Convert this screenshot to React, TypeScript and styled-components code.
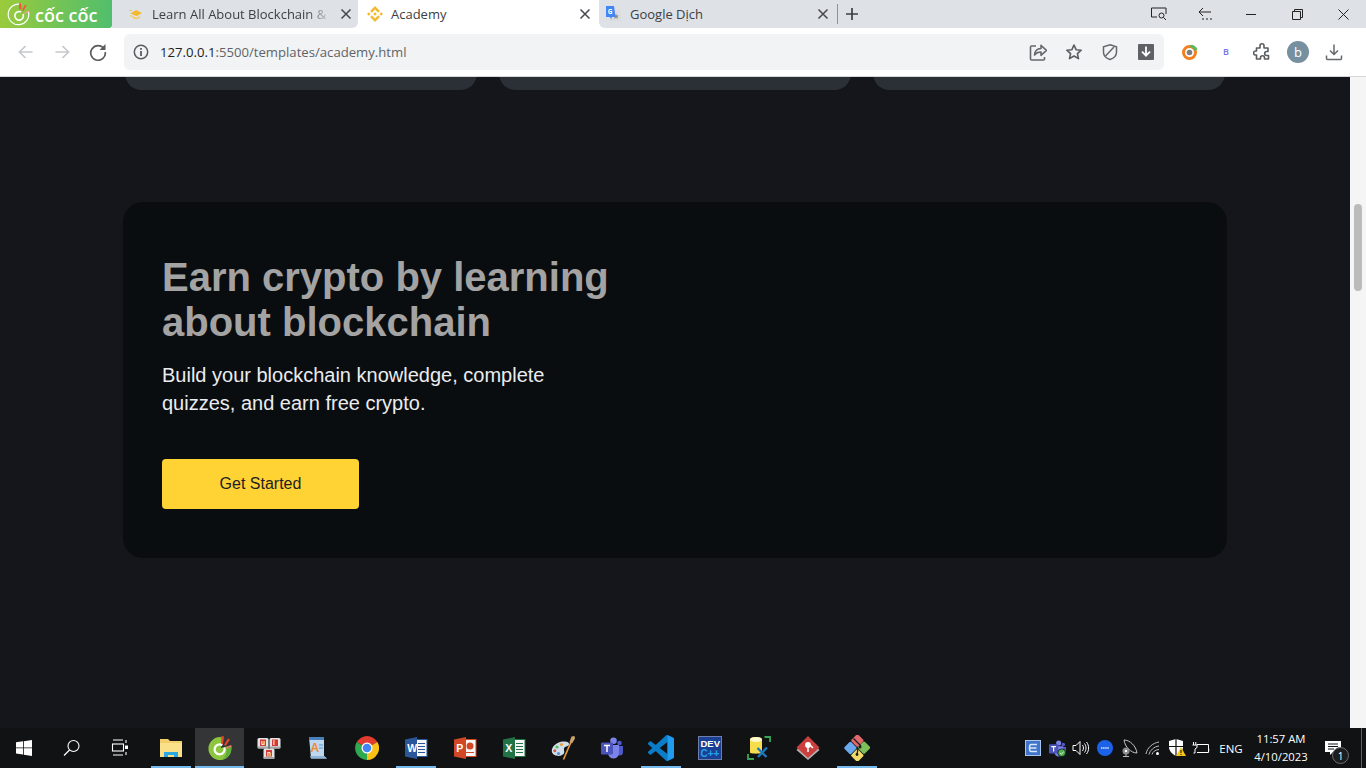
import React, { FC, ReactNode } from "react";
import styled, { createGlobalStyle } from "styled-components";

const GlobalStyle = createGlobalStyle`
  html, body {
    margin: 0;
    height: 100%;
    overflow: hidden;
  }
  * {
    box-sizing: border-box;
  }
`;

const Screen = styled.div`
  display: flex;
  flex-direction: column;
  width: 100%;
  height: 100vh;
  font-family: "Liberation Sans", Arial, sans-serif;
  background: #15161b;
`;

/* browser tabs */
const TabStrip = styled.div`
  display: flex;
  flex: none;
  height: 28px;
  background: #fff;
`;

const Brand = styled.div`
  display: flex;
  flex: none;
  align-items: center;
  gap: 4px;
  width: 112px;
  height: 100%;
  padding-left: 7px;
  background: linear-gradient(100deg, #9ccb3b 0%, #74c455 50%, #4fbe6e 100%);
  border-bottom-right-radius: 3px;
`;

const BrandName = styled.span`
  font-family: "Open Sans", sans-serif;
  font-size: 18px;
  line-height: 24px;
  font-weight: 600;
  color: #fff;
  padding-top: 1px;
`;

const Tab = styled.div<{ $active?: boolean; $width: number; $side?: "left" | "right"; $iconGap: number; $pad: number; $padRight: number }>`
  display: flex;
  flex: none;
  align-items: center;
  gap: ${(p) => p.$iconGap}px;
  width: ${(p) => p.$width}px;
  height: 100%;
  padding-left: ${(p) => p.$pad}px;
  padding-right: ${(p) => p.$padRight}px;
  background: ${(p) => (p.$active ? "#fff" : "#dee1e6")};
  border-bottom-right-radius: ${(p) => (p.$side === "right" ? 6 : 0)}px;
  border-bottom-left-radius: ${(p) => (p.$side === "left" ? 6 : 0)}px;
`;

const TabTitle = styled.span<{ $fade?: boolean }>`
  flex: 1;
  min-width: 0;
  white-space: nowrap;
  font-family: "Open Sans", sans-serif;
  font-size: 13px;
  color: #3c4043;
  ${(p) =>
    p.$fade &&
    `-webkit-mask-image: linear-gradient(90deg, #000 86%, rgba(0,0,0,0.25) 97%);
     mask-image: linear-gradient(90deg, #000 86%, rgba(0,0,0,0.25) 97%);`}
`;

const StripRest = styled.div`
  display: flex;
  flex: 1;
  align-items: center;
  height: 100%;
  background: #dee1e6;
`;

const TabDivider = styled.div`
  flex: none;
  width: 1px;
  height: 20px;
  background: #8f9296;
`;

const NewTab = styled.div`
  display: flex;
  flex: 1;
  align-items: center;
  height: 100%;
  padding-left: 7px;
`;

const WindowButtons = styled.div`
  display: flex;
  flex: none;
  align-items: center;
`;

const WindowButton = styled.div`
  display: flex;
  align-items: center;
  justify-content: center;
  width: 46px;
  height: 28px;
`;

/* address bar */
const Toolbar = styled.div`
  display: flex;
  flex: none;
  align-items: center;
  height: 49px;
  padding: 0 0 1px 8px;
  background: #fff;
  border-bottom: 1px solid #d5d7da;
`;

const NavButton = styled.div`
  display: flex;
  align-items: center;
  justify-content: center;
  flex: none;
  width: 36px;
  height: 36px;
`;

const Omnibox = styled.div`
  display: flex;
  flex: none;
  align-items: center;
  width: 1040px;
  height: 36px;
  margin: 0 8px;
  padding-left: 9px;
  border-radius: 6px;
  background: #f1f3f4;
`;

const Url = styled.div`
  flex: 1;
  padding-left: 11px;
  font-family: "Open Sans", sans-serif;
  font-size: 13.15px;
  color: #5f6368;
`;

const UrlHost = styled.span`
  color: #202124;
`;

const Avatar = styled.div`
  display: flex;
  align-items: center;
  justify-content: center;
  width: 22px;
  height: 22px;
  border-radius: 50%;
  background: #76909f;
  color: #fff;
  font-family: "Open Sans", sans-serif;
  font-size: 13px;
`;

const ExtensionLetter = styled.span`
  font-family: "Open Sans", sans-serif;
  font-size: 9px;
  font-weight: 600;
  color: #7474e0;
`;

/* page */
const Viewport = styled.div`
  display: flex;
  flex: 1;
  min-height: 0;
`;

const Main = styled.main`
  flex: 1;
  min-width: 0;
  padding: 0 123px;
  background: #15161b;
`;

const CardRow = styled.div`
  display: grid;
  grid-template-columns: repeat(3, 352px);
  gap: 22px;
  height: 13px;
  padding-left: 2px;
  overflow: hidden;
`;

const CardEnd = styled.div`
  height: 33px;
  margin-top: -20px;
  background: #2b2f36;
  border-radius: 20px;
`;

const Promo = styled.section`
  display: flex;
  flex-direction: column;
  align-items: flex-start;
  width: 1104px;
  height: 356px;
  margin-top: 112px;
  padding: 53px 39px 0;
  border-radius: 20px;
  background: #0a0d10;
`;

const PromoTitle = styled.h2`
  width: 480px;
  margin: 0;
  font-size: 40px;
  line-height: 45px;
  font-weight: 700;
  color: #a3a3a3;
`;

const PromoText = styled.p`
  width: 420px;
  margin: 16px 0 0;
  font-size: 20px;
  line-height: 28px;
  color: #eaecef;
`;

const CtaButton = styled.button`
  width: 197px;
  height: 50px;
  margin-top: 42px;
  border: 0;
  border-radius: 4px;
  background: #ffd333;
  color: #1e2026;
  font-family: inherit;
  font-size: 16px;
`;

const ScrollTrack = styled.div`
  flex: none;
  width: 16px;
  padding: 127px 4px 0;
  background: #f5f5f5;
`;

const ScrollThumb = styled.div`
  height: 87px;
  border-radius: 4px;
  background: #bbb;
`;

/* windows taskbar */
const Taskbar = styled.footer`
  display: flex;
  flex: none;
  align-items: stretch;
  height: 40px;
  background: #101214;
`;

const SystemButton = styled.div`
  display: flex;
  align-items: center;
  justify-content: center;
  flex: none;
  width: 48px;
`;

const AppList = styled.div`
  display: flex;
  flex: none;
  padding-left: 2px;
`;

const AppSlot = styled.div<{ $open?: boolean; $focused?: boolean }>`
  position: relative;
  display: flex;
  align-items: center;
  justify-content: center;
  flex: none;
  width: 49px;
  background: ${(p) => (p.$focused ? "#333537" : "transparent")};
  &::after {
    content: "";
    display: ${(p) => (p.$open ? "block" : "none")};
    position: absolute;
    bottom: 0;
    left: ${(p) => (p.$focused ? 0 : 5)}px;
    right: ${(p) => (p.$focused ? 0 : 4)}px;
    height: 2px;
    background: #76b9ed;
  }
`;

const Tray = styled.div`
  display: flex;
  flex: 1;
  align-items: center;
  justify-content: flex-end;
`;

const TrayIcon = styled.div`
  display: flex;
  align-items: center;
  justify-content: center;
  flex: none;
  width: 24px;
  height: 40px;
`;

const Lang = styled.div`
  flex: none;
  width: 36px;
  text-align: center;
  font-family: "Open Sans", sans-serif;
  font-size: 11.5px;
  color: #fff;
`;

const Clock = styled.div`
  flex: none;
  width: 64px;
  font-family: "Open Sans", sans-serif;
  font-size: 11.3px;
  line-height: 18px;
  text-align: center;
  color: #fff;
`;

const Notification = styled.div`
  position: relative;
  display: flex;
  align-items: center;
  flex: none;
  width: 48px;
  height: 40px;
  padding-left: 12px;
`;

const NotificationBadge = styled.span`
  position: absolute;
  right: 12px;
  bottom: 4px;
  display: flex;
  align-items: center;
  justify-content: center;
  width: 17px;
  height: 17px;
  border-radius: 50%;
  background: #1c1d1f;
  border: 1.5px solid #6d6e70;
  color: #fff;
  font-family: "Open Sans", sans-serif;
  font-size: 10px;
`;

const ShowDesktop = styled.div`
  flex: none;
  width: 5px;
  height: 100%;
  border-left: 1px solid #5c5e60;
`;

/* icons */
const Svg: FC<{ size?: number; w?: number; h?: number; vb?: string; children: ReactNode }> = ({ size = 16, w, h, vb, children }) => (
  <svg width={w ?? size} height={h ?? size} viewBox={vb ?? `0 0 ${size} ${size}`} fill="none" style={{ display: "block", flex: "none" }}>
    {children}
  </svg>
);

const CloseIcon: FC = () => (
  <Svg size={12}>
    <path d="M1.5 1.5l9 9M10.5 1.5l-9 9" stroke="#45474a" strokeWidth="1.5" />
  </Svg>
);

const CocCocLogo: FC = () => (
  <Svg size={24}>
    <path d="M13.500 2.300A10.300 10.300 0 1 0 21.500 10" stroke="#fff" strokeWidth="1.200" />
    <path d="M14 10a4.300 4.300 0 1 0 2 2" stroke="#fff" strokeWidth="1.600" />
    <path d="M12.300 7.500L12 1.500l1.900-.3.700 6.100z" fill="#f2563a" />
    <path d="M15 8.300l3-5.500 1.500.8-3 5.500z" fill="#f2563a" />
    <path d="M16.800 11l5-2.700.6 1.300-5 2.500z" fill="#f7a08c" />
  </Svg>
);

const AcademyFav: FC = () => (
  <Svg size={14}>
    <path d="M1.500 6.500l5.500-3.500 6 3-5.500 3.300z" fill="#f3ba2f" />
    <path d="M3.500 9l3.800 2 3.500-2v1.700c-2 1.800-4.800 1.800-7.300 0z" fill="#f7c948" />
    <path d="M0 3.500h3M1 9h2" stroke="#f7c948" />
  </Svg>
);

const BinanceFav: FC = () => (
  <Svg w={16} h={16} vb="0 0 126.610 126.610">
    <path
      d="M38.730 53.200l24.590-24.580 24.600 24.600 14.300-14.310L63.320 0 24.420 38.900zM0 63.310l14.300-14.310 14.310 14.310-14.310 14.300zM38.730 73.410l24.590 24.590 24.600-24.600 14.310 14.290-38.900 38.910-38.910-38.880-.02-.02zM98 63.310l14.300-14.310 14.310 14.300-14.310 14.320zM77.830 63.300L63.320 48.780 52.590 59.510l-1.240 1.230-2.540 2.540 14.510 14.500 14.500-14.470z"
      fill="#f3ba2f"
    />
  </Svg>
);

const TranslateFav: FC = () => (
  <Svg size={16}>
    <rect x="6" y="4" width="10" height="11" fill="#dadce0" />
    <path d="M11 7.500l.9 1.900 2 .2-1.500 1.300.5 2-1.900-1.100-1.800 1.100.4-2-1.500-1.300 2-.2z" fill="#8a8c90" />
    <path d="M1 0h8l1.500 11H6.500v2.800L4.700 11H1z" fill="#4285f4" />
    <text x="2.700" y="8" fontFamily="Open Sans" fontWeight="700" fontSize="6.500" fill="#fff">G</text>
  </Svg>
);

const ArrowIcon: FC<{ flip?: boolean }> = ({ flip }) => (
  <Svg size={16}>
    <path d={flip ? "M1.500 8h13M8.500 2l6 6-6 6" : "M14.500 8h-13M7.500 2l-6 6 6 6"} stroke="#c5c7ca" strokeWidth="1.600" />
  </Svg>
);

const ReloadIcon: FC = () => (
  <Svg size={18}>
    <path d="M15.200 6A7.300 7.300 0 1 0 16.300 9" stroke="#5a5d60" strokeWidth="1.700" />
    <path d="M16.500 1v6h-6z" fill="#5a5d60" />
  </Svg>
);

const InfoIcon: FC = () => (
  <Svg size={16}>
    <circle cx="8" cy="8" r="6.700" stroke="#5a5d60" strokeWidth="1.500" />
    <rect x="7.100" y="7" width="1.800" height="5" fill="#5a5d60" />
    <rect x="7.100" y="4" width="1.800" height="1.800" fill="#5a5d60" />
  </Svg>
);

const ShareIcon: FC = () => (
  <Svg size={18}>
    <path d="M7 3H2.500A1 1 0 0 0 1.500 4v12a1 1 0 0 0 1 1h12a1 1 0 0 0 1-1v-2" stroke="#66696c" strokeWidth="1.600" />
    <path d="M5.500 12c.3-4 3-6.300 6.500-6.500V2.300l5.500 5-5.500 5V9C9.500 9 7 10 5.500 12z" stroke="#66696c" strokeWidth="1.600" strokeLinejoin="round" />
  </Svg>
);

const StarIcon: FC = () => (
  <Svg size={18}>
    <path d="M9 2l2.100 4.700 5.100.5-3.800 3.400 1.100 5L9 13l-4.500 2.600 1.100-5L1.800 7.200l5.100-.5z" stroke="#5a5d60" strokeWidth="1.600" strokeLinejoin="round" />
  </Svg>
);

const ShieldIcon: FC = () => (
  <Svg size={18}>
    <path d="M9 1.800l6.500 2v5.400c0 3.500-2.700 6-6.500 7.300-3.800-1.300-6.500-3.800-6.500-7.300V3.800z" stroke="#66696c" strokeWidth="1.500" />
    <path d="M4.500 13L13 4" stroke="#66696c" strokeWidth="1.500" />
  </Svg>
);

const SaveBoxIcon: FC = () => (
  <Svg size={18}>
    <rect x="1" y="1" width="16" height="16" rx="1" fill="#5f6164" />
    <path d="M9 3.500v9M5 8.700l4 4 4-4" stroke="#fff" strokeWidth="1.800" />
  </Svg>
);

const BrowserExtIcon: FC = () => (
  <Svg size={18}>
    <circle cx="8.500" cy="9.500" r="6" stroke="#f28022" strokeWidth="3" />
    <path d="M9.500 1.700a7.500 7.500 0 0 1 7 5l-2.900 1A4.600 4.600 0 0 0 9.200 4.600z" fill="#5cb85c" />
    <circle cx="8.500" cy="9.500" r="2.800" fill="#7b7f83" />
  </Svg>
);

const PuzzleIcon: FC = () => (
  <Svg size={18}>
    <path d="M7 2.800a2 2 0 0 1 4 0V5h4v3.500h-1.300a2 2 0 0 0 0 4H15.500V16h-4v-1.300a2 2 0 0 0-4 0V16H3.500v-4H2.600a2 2 0 0 1 0-4h.900V5H7z" stroke="#5a5d60" strokeWidth="1.600" strokeLinejoin="round" />
  </Svg>
);

const DownloadIcon: FC = () => (
  <Svg size={18}>
    <path d="M9 1.500v10M5 7.500l4 4 4-4" stroke="#66696c" strokeWidth="1.500" />
    <path d="M1.500 12.500v3a1 1 0 0 0 1 1h13a1 1 0 0 0 1-1v-3" stroke="#66696c" strokeWidth="1.500" />
  </Svg>
);

const WindowsLogo: FC = () => (
  <Svg size={16}>
    <path d="M0 2.300L7 1.300V7.500H0zM7.800 1.200L16 0V7.500H7.800zM0 8.300h7v6.300L0 13.600zM7.800 8.300H16V16l-8.200-1.200z" fill="#fff" />
  </Svg>
);

const SearchIcon: FC = () => (
  <Svg size={18}>
    <circle cx="10.500" cy="7" r="5.500" stroke="#fff" strokeWidth="1.100" />
    <path d="M6.500 11L1 16.500" stroke="#fff" strokeWidth="1.300" />
  </Svg>
);

const TaskViewIcon: FC = () => (
  <Svg size={18}>
    <path d="M2 1h10M2 16h10" stroke="#fff" strokeWidth="1.100" />
    <rect x="1.500" y="5" width="11" height="7" stroke="#fff" strokeWidth="1.100" />
    <path d="M15 1v3M15 13v3" stroke="#fff" strokeWidth="1.100" />
    <rect x="14" y="6.500" width="3" height="3.500" fill="#fff" />
  </Svg>
);

const ExplorerIcon: FC = () => (
  <Svg w={22} h={20} vb="0 0 22 20">
    <path d="M0 1h8l2 2h12v15H0z" fill="#f3cf6b" />
    <path d="M0 5h22v14H0z" fill="#fbe08a" />
    <path d="M4 19v-5h14v5h-4v-2H8v2z" fill="#2ea9e0" />
  </Svg>
);

const CocCocApp: FC = () => (
  <Svg size={24}>
    <path d="M14.500 1.400A11.500 11.500 0 1 0 23 9.500L13 12z" fill="#8cc63f" />
    <path d="M23 9.500a11.500 11.500 0 0 1-9 13.700A11 11 0 0 0 18 11z" fill="#5cae3c" />
    <path d="M14.300 9.200a5 5 0 1 0 2 2.500" stroke="#fff" strokeWidth="2.200" />
    <path d="M13 7.500L13.500 0l2.500.4-.9 7.600z" fill="#e8452c" />
    <path d="M16 9l4-6.500 2 1.200-4.300 6.400z" fill="#e8452c" />
    <path d="M18 11.500l5-2.500.7 1.800-5.300 2z" fill="#f0785f" />
  </Svg>
);

const KeyCap: FC<{ x: number; y: number; letter: string }> = ({ x, y, letter }) => (
  <g>
    <rect x={x} y={y} width="11" height="10.500" rx="1.500" fill="#e4e4e4" />
    <rect x={x} y={y + 8.500} width="11" height="2" rx="1" fill="#a5a5a5" />
    <rect x={x + 2.500} y={y + 1.500} width="6" height="6.500" fill="#cf3a36" />
    <text x={x + 3.500} y={y + 7} fontFamily="Liberation Sans" fontWeight="700" fontSize="6.500" fill="#fff">{letter}</text>
  </g>
);

const UnikeyIcon: FC = () => (
  <Svg w={24} h={21} vb="0 0 24 21">
    <KeyCap x={0.500} y={0} letter="u" />
    <KeyCap x={12.500} y={0} letter="i" />
    <KeyCap x={6.500} y={10.500} letter="n" />
  </Svg>
);

const DocAIcon: FC = () => (
  <Svg w={20} h={24} vb="0 0 20 24">
    <path d="M1 1h15v19l3 2.500H3z" fill="#bcd7ee" />
    <path d="M1 1h15v3H1z" fill="#4a80ba" />
    <path d="M2 20h14l3 2.500H3z" fill="#8fb4d6" />
    <text x="2.500" y="15.500" fontFamily="Liberation Sans" fontWeight="700" fontSize="12" fill="#ee8b2d">A</text>
    <path d="M11 9h4M11 12h4" stroke="#5a93c8" />
  </Svg>
);

const ChromeIcon: FC = () => (
  <Svg size={24}>
    <path d="M12 12L1.700 6A12 12 0 0 1 22.400 6z" fill="#e33b2e" />
    <path d="M12 12L22.400 6A12 12 0 0 1 12 24z" fill="#fbc116" />
    <path d="M12 12V24A12 12 0 0 1 1.700 6z" fill="#2fa84f" />
    <circle cx="12" cy="12" r="5.500" fill="#fff" />
    <circle cx="12" cy="12" r="4.300" fill="#4285f4" />
  </Svg>
);

const OfficeIcon: FC<{ color: string; letter: string; lines?: boolean }> = ({ color, letter, lines }) => (
  <Svg w={24} h={22} vb="0 0 24 22">
    <rect x="9" y="2.500" width="14" height="17" fill="#f6f6f6" stroke={color} />
    {lines && <path d="M14 6.500h7M14 9.500h7M14 12.500h7M14 15.500h7" stroke={color} />}
    {!lines && <circle cx="17" cy="9" r="3.500" fill={color} />}
    {!lines && <path d="M13 15.500h8" stroke={color} />}
    <path d="M1 2.500L13 0v22L1 19.500z" fill={color} />
    <text x="3.200" y="15" fontFamily="Liberation Sans" fontWeight="700" fontSize="10.500" fill="#fff">{letter}</text>
  </Svg>
);

const PaletteIcon: FC = () => (
  <Svg size={24}>
    <path d="M.8 15.500C.5 10 6 6 12 5.500c4-.3 6.500 1 6 3-.7 2.500-4.500 1.500-5 4-.4 2 1.200 3.500-.5 5.500-3.500 3.500-11 2-11.700-2.500z" fill="#cfe0ec" />
    <circle cx="6" cy="11" r="1.600" fill="#5cb85c" />
    <circle cx="10.500" cy="8.500" r="1.600" fill="#e8a13a" />
    <circle cx="3.800" cy="14.800" r="1.500" fill="#d9534f" />
    <circle cx="7.500" cy="17.500" r="1.600" fill="#5b8fd6" />
    <path d="M12.500 23.500L20 6" stroke="#e39a3e" strokeWidth="1.700" />
    <path d="M18.500 6l2-5.500 3-.5.500 2.500-3 5z" fill="#c9a46c" />
  </Svg>
);

const TeamsIcon: FC<{ scale?: number; check?: boolean }> = ({ scale = 22, check }) => (
  <Svg w={scale} h={scale} vb="0 0 22 22">
    <circle cx="12.500" cy="3.800" r="3.300" fill="#7b83eb" />
    <circle cx="18.500" cy="6" r="2.300" fill="#5059c9" />
    <path d="M15 9h7v6a3.500 3.500 0 0 1-7 0z" fill="#5059c9" />
    <path d="M7 8h11v8a5.500 5.500 0 0 1-11 0z" fill="#7b83eb" />
    <rect x="0" y="5.500" width="12" height="12" rx="1" fill="#4b53bc" />
    <path d="M3 8.500h6M6 8.500v6.500" stroke="#fff" strokeWidth="1.500" />
    {check && <circle cx="16.500" cy="16.500" r="5" fill="#4caf50" stroke="#101214" />}
    {check && <path d="M14 16.500l2 2 3-3.500" stroke="#fff" />}
  </Svg>
);

const VsCodeIcon: FC = () => (
  <Svg w={26} h={26} vb="0 0 24 24">
    <path
      d="M23.150 2.587L18.210.21a1.494 1.494 0 0 0-1.705.29l-9.460 8.630-4.120-3.128a.999.999 0 0 0-1.276.057L.327 7.261A1 1 0 0 0 .326 8.740L3.899 12 .326 15.260a1 1 0 0 0 .001 1.479L1.650 17.940a.999.999 0 0 0 1.276.057l4.120-3.128 9.460 8.630a1.492 1.492 0 0 0 1.704.29l4.942-2.377A1.500 1.500 0 0 0 24 20.060V3.939a1.500 1.500 0 0 0-.850-1.352zm-5.146 14.861L10.826 12l7.178-5.448v10.896z"
      fill="#0a7cc8"
    />
    <path d="M18 .1l5.150 2.487A1.500 1.500 0 0 1 24 3.939V20.060a1.500 1.500 0 0 1-.850 1.352L18 23.900z" fill="#1f9cf0" />
  </Svg>
);

const DevCppIcon: FC = () => (
  <Svg size={24}>
    <rect x="0.500" y="0.500" width="23" height="23" fill="#1b3f94" stroke="#6f7ea8" />
    <text x="2.500" y="10.500" fontFamily="Liberation Sans" fontWeight="700" fontSize="9.500" fill="#fff">DEV</text>
    <text x="2.500" y="20.500" fontFamily="Liberation Sans" fontWeight="700" fontSize="10" fill="#24a2e8">C++</text>
  </Svg>
);

const DbToolsIcon: FC = () => (
  <Svg size={24}>
    <path d="M3 3.500c0-3.300 12-3.300 12 0v13c0 1.500-12 1.500-12 0z" fill="#f6dd4a" />
    <ellipse cx="9" cy="3.500" rx="6" ry="2.500" fill="#fff8cf" />
    <path d="M17.500 1H23v5M1 18v5h6" stroke="#3aa655" strokeWidth="1.800" />
    <path d="M10.500 12l9 9M20 11.500l-9 9.500" stroke="#1f78bd" strokeWidth="2.400" />
  </Svg>
);

const RedDiamondIcon: FC = () => (
  <Svg size={24}>
    <path d="M12 2.500l11.500 11.500L12 24 .5 14z" fill="#b9b1b1" />
    <path d="M12 0l11.500 11.500L12 22 .5 11.500z" fill="#c9403f" />
    <circle cx="12" cy="9" r="2.900" fill="#fff" />
    <path d="M12 10v6M14 9l3 3" stroke="#fff" strokeWidth="1.500" />
  </Svg>
);

const GitColorIcon: FC = () => (
  <Svg size={26}>
    <rect x="8.500" y="0.500" width="9.500" height="9.500" rx="1.500" transform="rotate(45 13 5.500)" fill="#e0696c" />
    <rect x="1.500" y="8" width="9.500" height="9.500" rx="1.500" transform="rotate(45 6 13)" fill="#6aa9ee" />
    <rect x="15" y="8" width="9.500" height="9.500" rx="1.500" transform="rotate(45 20 13)" fill="#7cc05a" />
    <rect x="8.500" y="15.500" width="9.500" height="9.500" rx="1.500" transform="rotate(45 13 20.500)" fill="#f3d968" />
    <path d="M9.500 3.500L17 11M14 13l-1 7" stroke="#1c1c1c" strokeWidth="1.300" />
    <circle cx="16" cy="12" r="1.500" fill="#1c1c1c" />
    <circle cx="13" cy="19.500" r="1.400" fill="#1c1c1c" />
  </Svg>
);

const LeTrayIcon: FC = () => (
  <Svg size={16}>
    <rect x="0.500" y="0.500" width="15" height="15" fill="#3f74c9" stroke="#a8c4ef" />
    <path d="M12 4.500H6C4 4.500 4 11.500 6 11.500h6M4.500 8h7" stroke="#d8e6fb" strokeWidth="1.500" />
  </Svg>
);

const VolumeIcon: FC = () => (
  <Svg w={18} h={16} vb="0 0 18 16">
    <path d="M1 5.500h3l4-4v13l-4-4H1z" stroke="#fff" />
    <path d="M10.500 5c1.300 1.800 1.300 4.200 0 6M12.500 3.500c2 2.700 2 6.300 0 9M14.500 2c2.800 3.600 2.800 8.400 0 12" stroke="#fff" />
  </Svg>
);

const ZoomTrayIcon: FC = () => (
  <Svg size={16}>
    <circle cx="8" cy="8" r="8" fill="#1c62e8" />
    <path d="M4 8h8" stroke="#dbe6fb" strokeWidth="1.600" strokeDasharray="1.500 0.600" />
  </Svg>
);

const SatelliteIcon: FC = () => (
  <Svg size={18}>
    <path d="M4 1c6 0 12 6 13 13-6 0-12-6-13-13z" stroke="#c5c5c5" />
    <circle cx="6" cy="12" r="3.500" fill="#8b8b8b" />
    <circle cx="6" cy="12" r="1.200" fill="#fff" />
    <path d="M6 15v2.500M3 17.500h6" stroke="#bbb" />
  </Svg>
);

const WifiIcon: FC = () => (
  <Svg size={16}>
    <path d="M1 14C2 8 7.500 3 14 2M4 14.500C5 10.500 9 6.500 14 6M7 14.500c.6-2.500 3-4.700 7-5" stroke="#bdbdbd" />
    <circle cx="12.500" cy="13.500" r="1.500" fill="#fff" />
  </Svg>
);

const DefenderIcon: FC = () => (
  <Svg size={18}>
    <path d="M8 0l7 2v6c0 4-3 7-7 9-4-2-7-5-7-9V2z" fill="#fff" />
    <path d="M8 0v17M1 7.500h14" stroke="#101214" strokeWidth="1.200" />
    <path d="M13 8l5 9H8z" fill="#f5c518" />
    <path d="M13 11v3M13 15v1" stroke="#101214" />
  </Svg>
);

const BatteryIcon: FC = () => (
  <Svg w={18} h={14} vb="0 0 18 14">
    <path d="M5 3.500h11.500v8H5M16.500 6v3h1" stroke="#fff" />
    <path d="M1.500 1v3M3.800 1v3M.5 4h4.500v2.500L3 8v4H1.500" stroke="#fff" />
  </Svg>
);

const NotifyIcon: FC = () => (
  <Svg size={16}>
    <path d="M0 1h16v11H8l-3 3v-3H0z" fill="#fff" />
    <path d="M3 4h10M3 6.500h10M3 9h6" stroke="#101214" />
  </Svg>
);

const taskbarApps: { icon: ReactNode; open?: boolean; focused?: boolean }[] = [
  { icon: <ExplorerIcon />, open: true },
  { icon: <CocCocApp />, open: true, focused: true },
  { icon: <UnikeyIcon /> },
  { icon: <DocAIcon /> },
  { icon: <ChromeIcon /> },
  { icon: <OfficeIcon color="#2b579a" letter="W" lines />, open: true },
  { icon: <OfficeIcon color="#d24726" letter="P" /> },
  { icon: <OfficeIcon color="#217346" letter="X" lines /> },
  { icon: <PaletteIcon /> },
  { icon: <TeamsIcon /> },
  { icon: <VsCodeIcon />, open: true },
  { icon: <DevCppIcon /> },
  { icon: <DbToolsIcon /> },
  { icon: <RedDiamondIcon /> },
  { icon: <GitColorIcon />, open: true },
];

const App: FC = () => {
  return (
    <Screen>
      <GlobalStyle />
      <TabStrip>
        <Brand>
          <CocCocLogo />
          <BrandName>cốc cốc</BrandName>
        </Brand>
        <Tab $width={246} $side="right" $iconGap={9} $pad={17} $padRight={6}>
          <AcademyFav />
          <TabTitle $fade>Learn All About Blockchain &amp;</TabTitle>
          <CloseIcon />
        </Tab>
        <Tab $active $width={241} $iconGap={8} $pad={9} $padRight={8}>
          <BinanceFav />
          <TabTitle>Academy</TabTitle>
          <CloseIcon />
        </Tab>
        <Tab $width={238} $side="left" $iconGap={9} $pad={6} $padRight={8}>
          <TranslateFav />
          <TabTitle>Google Dịch</TabTitle>
          <CloseIcon />
        </Tab>
        <StripRest>
          <TabDivider />
          <NewTab>
            <Svg size={14}>
              <path d="M7 1v12M1 7h12" stroke="#3c4043" strokeWidth="1.700" />
            </Svg>
          </NewTab>
          <WindowButtons>
            <WindowButton>
              <Svg w={18} h={14} vb="0 0 18 14">
                <path d="M7 10H1.500V1h14.500v6" stroke="#222" />
                <circle cx="11.500" cy="8.500" r="2.500" stroke="#222" />
                <path d="M13.500 10.500l2.500 2.500" stroke="#222" />
              </Svg>
            </WindowButton>
            <WindowButton>
              <Svg w={16} h={14} vb="0 0 16 14">
                <path d="M14 5H2M6 1L2 5l4 4" stroke="#222" />
                <path d="M5 12h2M9 12h2M13 12h2" stroke="#222" />
              </Svg>
            </WindowButton>
            <WindowButton>
              <Svg size={11}>
                <path d="M0 5.500h10" stroke="#222" />
              </Svg>
            </WindowButton>
            <WindowButton>
              <Svg size={11}>
                <path d="M.5 2.500h8v8h-8zM2.500 2.500v-2h8v8h-2" stroke="#222" />
              </Svg>
            </WindowButton>
            <WindowButton>
              <Svg size={11}>
                <path d="M.5.500l10 10M10.500.500l-10 10" stroke="#222" />
              </Svg>
            </WindowButton>
          </WindowButtons>
        </StripRest>
      </TabStrip>

      <Toolbar>
        <NavButton>
          <ArrowIcon />
        </NavButton>
        <NavButton>
          <ArrowIcon flip />
        </NavButton>
        <NavButton>
          <ReloadIcon />
        </NavButton>
        <Omnibox>
          <InfoIcon />
          <Url>
            <UrlHost>127.0.0.1</UrlHost>:5500/templates/academy.html
          </Url>
          <NavButton>
            <ShareIcon />
          </NavButton>
          <NavButton>
            <StarIcon />
          </NavButton>
          <NavButton>
            <ShieldIcon />
          </NavButton>
          <NavButton>
            <SaveBoxIcon />
          </NavButton>
        </Omnibox>
        <NavButton>
          <BrowserExtIcon />
        </NavButton>
        <NavButton>
          <ExtensionLetter>B</ExtensionLetter>
        </NavButton>
        <NavButton>
          <PuzzleIcon />
        </NavButton>
        <NavButton>
          <Avatar>b</Avatar>
        </NavButton>
        <NavButton>
          <DownloadIcon />
        </NavButton>
      </Toolbar>

      <Viewport>
        <Main>
          <CardRow>
            <CardEnd />
            <CardEnd />
            <CardEnd />
          </CardRow>
          <Promo>
            <PromoTitle>Earn crypto by learning about blockchain</PromoTitle>
            <PromoText>Build your blockchain knowledge, complete quizzes, and earn free crypto.</PromoText>
            <CtaButton>Get Started</CtaButton>
          </Promo>
        </Main>
        <ScrollTrack>
          <ScrollThumb />
        </ScrollTrack>
      </Viewport>

      <Taskbar>
        <SystemButton>
          <WindowsLogo />
        </SystemButton>
        <SystemButton>
          <SearchIcon />
        </SystemButton>
        <SystemButton>
          <TaskViewIcon />
        </SystemButton>
        <AppList>
          {taskbarApps.map((app, i) => (
            <AppSlot key={i} $open={app.open} $focused={app.focused}>
              {app.icon}
            </AppSlot>
          ))}
        </AppList>
        <Tray>
          <TrayIcon>
            <LeTrayIcon />
          </TrayIcon>
          <TrayIcon>
            <TeamsIcon scale={17} check />
          </TrayIcon>
          <TrayIcon>
            <VolumeIcon />
          </TrayIcon>
          <TrayIcon>
            <ZoomTrayIcon />
          </TrayIcon>
          <TrayIcon>
            <SatelliteIcon />
          </TrayIcon>
          <TrayIcon>
            <WifiIcon />
          </TrayIcon>
          <TrayIcon>
            <DefenderIcon />
          </TrayIcon>
          <TrayIcon>
            <BatteryIcon />
          </TrayIcon>
          <Lang>ENG</Lang>
          <Clock>
            11:57 AM
            <br />
            4/10/2023
          </Clock>
          <Notification>
            <NotifyIcon />
            <NotificationBadge>1</NotificationBadge>
          </Notification>
          <ShowDesktop />
        </Tray>
      </Taskbar>
    </Screen>
  );
};

export default App;
